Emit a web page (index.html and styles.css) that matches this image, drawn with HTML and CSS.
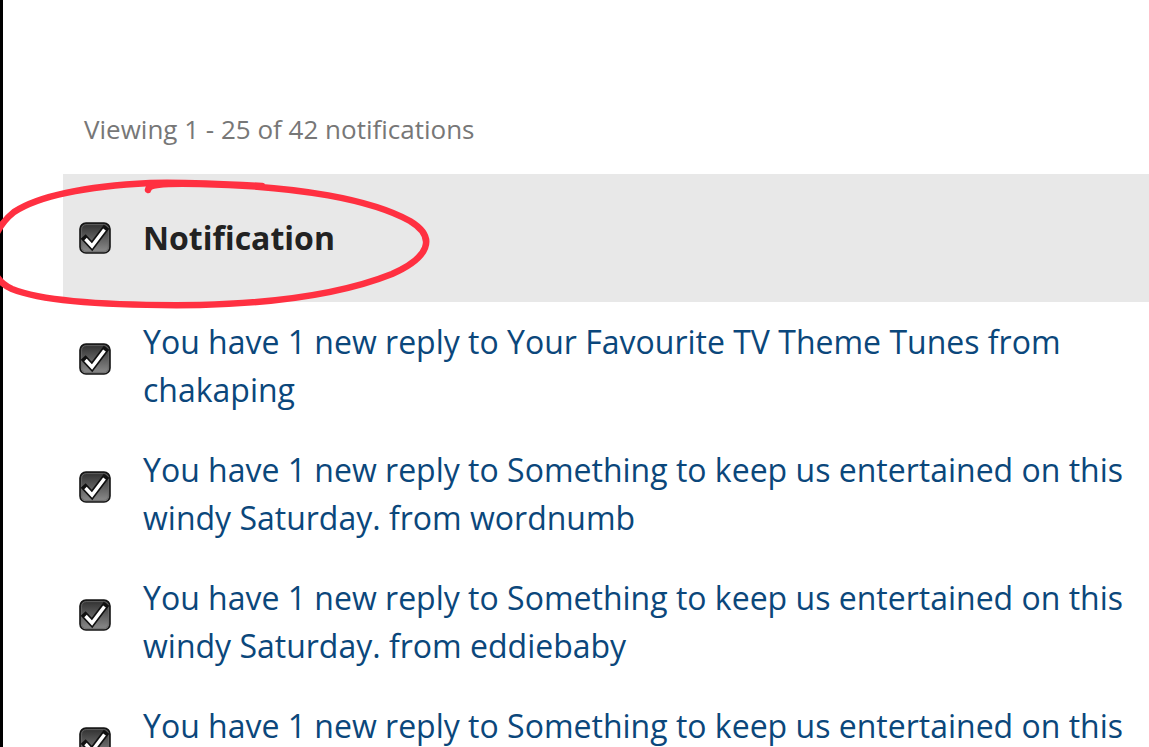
FILE: index.html
```html
<!DOCTYPE html>
<html lang="en">
<head>
<meta charset="utf-8">
<title>Notifications</title>
<link rel="stylesheet" href="styles.css">
</head>
<body>
<svg class="defs" width="0" height="0" aria-hidden="true">
  <defs>
    <linearGradient id="cbg" x1="0" y1="0" x2="0" y2="1">
      <stop offset="0" stop-color="#2e2e2e"/>
      <stop offset="1" stop-color="#8e8e8e"/>
    </linearGradient>
    <symbol id="cb" viewBox="0 0 32 32">
      <rect x="1" y="1" width="30" height="30" rx="6" ry="6" fill="url(#cbg)" stroke="#151515" stroke-width="1.6"/>
      <rect x="2.6" y="2.6" width="26.8" height="26.8" rx="4.6" ry="4.6" fill="none" stroke="#6a6a6a" stroke-width="0.8"/>
      <polyline points="6.5,17 13,24 25.5,7.5" fill="none" stroke="#111" stroke-width="6.8" stroke-linejoin="miter" stroke-linecap="square"/>
      <polyline points="6.5,17 13,24 25.5,7.5" fill="none" stroke="#fff" stroke-width="3.4" stroke-linejoin="miter" stroke-linecap="butt"/>
    </symbol>
  </defs>
</svg>
<div class="page">
  <div class="viewing">Viewing 1 - 25 of 42 notifications</div>
  <div class="list">
    <div class="head">
      <svg class="cb" viewBox="0 0 32 32"><use href="#cb"/></svg>
      <span class="head-title">Notification</span>
    </div>
    <div class="row">
      <svg class="cb" viewBox="0 0 32 32"><use href="#cb"/></svg>
      <a class="row-text" href="#">You have 1 new reply to Your Favourite TV Theme Tunes from chakaping</a>
    </div>
    <div class="row">
      <svg class="cb" viewBox="0 0 32 32"><use href="#cb"/></svg>
      <a class="row-text" href="#">You have 1 new reply to Something to keep us entertained on this windy Saturday. from wordnumb</a>
    </div>
    <div class="row">
      <svg class="cb" viewBox="0 0 32 32"><use href="#cb"/></svg>
      <a class="row-text" href="#">You have 1 new reply to Something to keep us entertained on this windy Saturday. from eddiebaby</a>
    </div>
    <div class="row">
      <svg class="cb" viewBox="0 0 32 32"><use href="#cb"/></svg>
      <a class="row-text" href="#">You have 1 new reply to Something to keep us entertained on this windy Saturday. from wordnumb</a>
    </div>
  </div>
</div>
<svg class="annotation" width="1149" height="747" viewBox="0 0 1149 747" aria-hidden="true">
  <path d="M148,190 C149,185 160,183 200,184 C300,186 372,200 410,221 C438,238 428,258 392,274 C342,294 280,303 200,305 C112,306 42,301 12,289 C-18,276 -14,234 14,212 C40,195 92,186 150,183 C185,182 225,184 262,186" fill="none" stroke="#ff3041" stroke-width="6.5" stroke-linecap="round" stroke-linejoin="round"/>
</svg>
</body>
</html>
```

FILE: styles.css
```css
html, body {
  margin: 0;
  padding: 0;
  background: #fff;
  height: 100%;
  overflow: hidden;
}

body {
  font-family: "Open Sans", "Noto Sans", sans-serif;
  position: relative;
}

.defs {
  position: absolute;
  width: 0;
  height: 0;
  overflow: hidden;
}

.page {
  border-left: 3px solid #000;
  padding-left: 60px;
  min-height: 100%;
  box-sizing: border-box;
}

.viewing {
  padding: 108px 0 0 21px;
  line-height: 42px;
  height: 42px;
  margin-bottom: 24px;
  font-size: 26px;
  color: #777;
}

.list {
  display: flex;
  flex-direction: column;
}

.head {
  background: #e8e8e8;
  height: 128px;
  display: flex;
  align-items: center;
  padding-left: 16px;
  gap: 32px;
}

.head-title {
  font-size: 32px;
  font-weight: 700;
  color: #222;
  line-height: 48px;
}

.cb {
  width: 32px;
  height: 32px;
  flex: 0 0 32px;
  display: block;
}

.row {
  display: flex;
  align-items: flex-start;
  padding: 16px 0 16px 16px;
  gap: 32px;
}

.row .cb {
  margin-top: 25px;
}

.row-text {
  font-size: 32px;
  line-height: 48px;
  color: #0b477b;
  text-decoration: none;
  flex: 1;
}

.annotation {
  position: absolute;
  left: 0;
  top: 0;
  pointer-events: none;
}
```
